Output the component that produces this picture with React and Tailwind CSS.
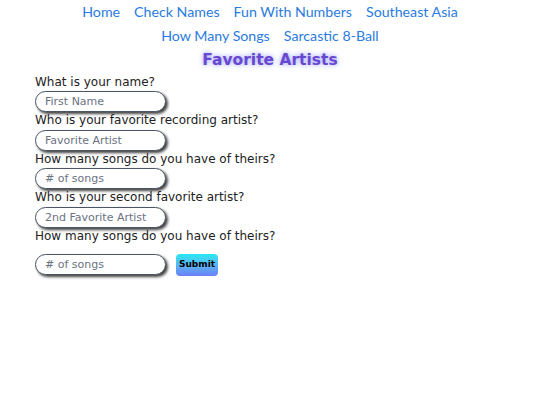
const fields = [
  { label: 'What is your name?', placeholder: 'First Name' },
  { label: 'Who is your favorite recording artist?', placeholder: 'Favorite Artist' },
  { label: 'How many songs do you have of theirs?', placeholder: '# of songs' },
  { label: 'Who is your second favorite artist?', placeholder: '2nd Favorite Artist' },
];

const links = ['Home', 'Check Names', 'Fun With Numbers', 'Southeast Asia', 'How Many Songs', 'Sarcastic 8-Ball'];

const inputClass =
  'w-[131px] h-[21px] rounded-[11px] border border-gray-600 bg-white px-[9px] text-[11px] text-gray-800 placeholder:text-gray-500 shadow-[2px_2px_3px_rgba(0,0,0,0.75)] outline-none';

const App = () => {
  return (
    <div className="min-h-screen bg-white text-[#222]" style={{ fontFamily: '"DejaVu Sans", sans-serif' }}>
      {/* Nav */}
      <nav className="flex flex-wrap justify-center gap-x-[14px] px-[70px]" style={{ fontFamily: 'Lato, sans-serif' }}>
        {links.map((l) => (
          <a key={l} href="#" className="text-[14.2px] leading-[24px] text-[#2a7be0]">
            {l}
          </a>
        ))}
      </nav>

      <h1
        className="text-center text-[15.5px] font-bold leading-[24px] text-[#6a47d0] [text-shadow:0_0_5px_rgba(90,110,255,0.7)]"
        style={{ fontFamily: '"DejaVu Sans", sans-serif' }}
      >
        Favorite Artists
      </h1>

      <form className="px-[35px] pt-[1.5px] text-[12px]">
        {fields.map((f) => (
          <div key={f.label}>
            <label className="block leading-[17.5px]">{f.label}</label>
            <input type="text" placeholder={f.placeholder} className={inputClass} />
          </div>
        ))}
        <label className="block leading-[17.5px]">How many songs do you have of theirs?</label>
        <div className="mt-[8.5px] flex items-start gap-[10px]">
          <input type="text" placeholder="# of songs" className={inputClass} />
          <button
            type="submit"
            className="h-[22px] w-[42px] rounded-[4px] bg-gradient-to-b from-[#1de9f2] to-[#6a7ff5] text-[9px] font-bold text-black"
          >
            Submit
          </button>
        </div>
      </form>
    </div>
  );
};

export default App;
